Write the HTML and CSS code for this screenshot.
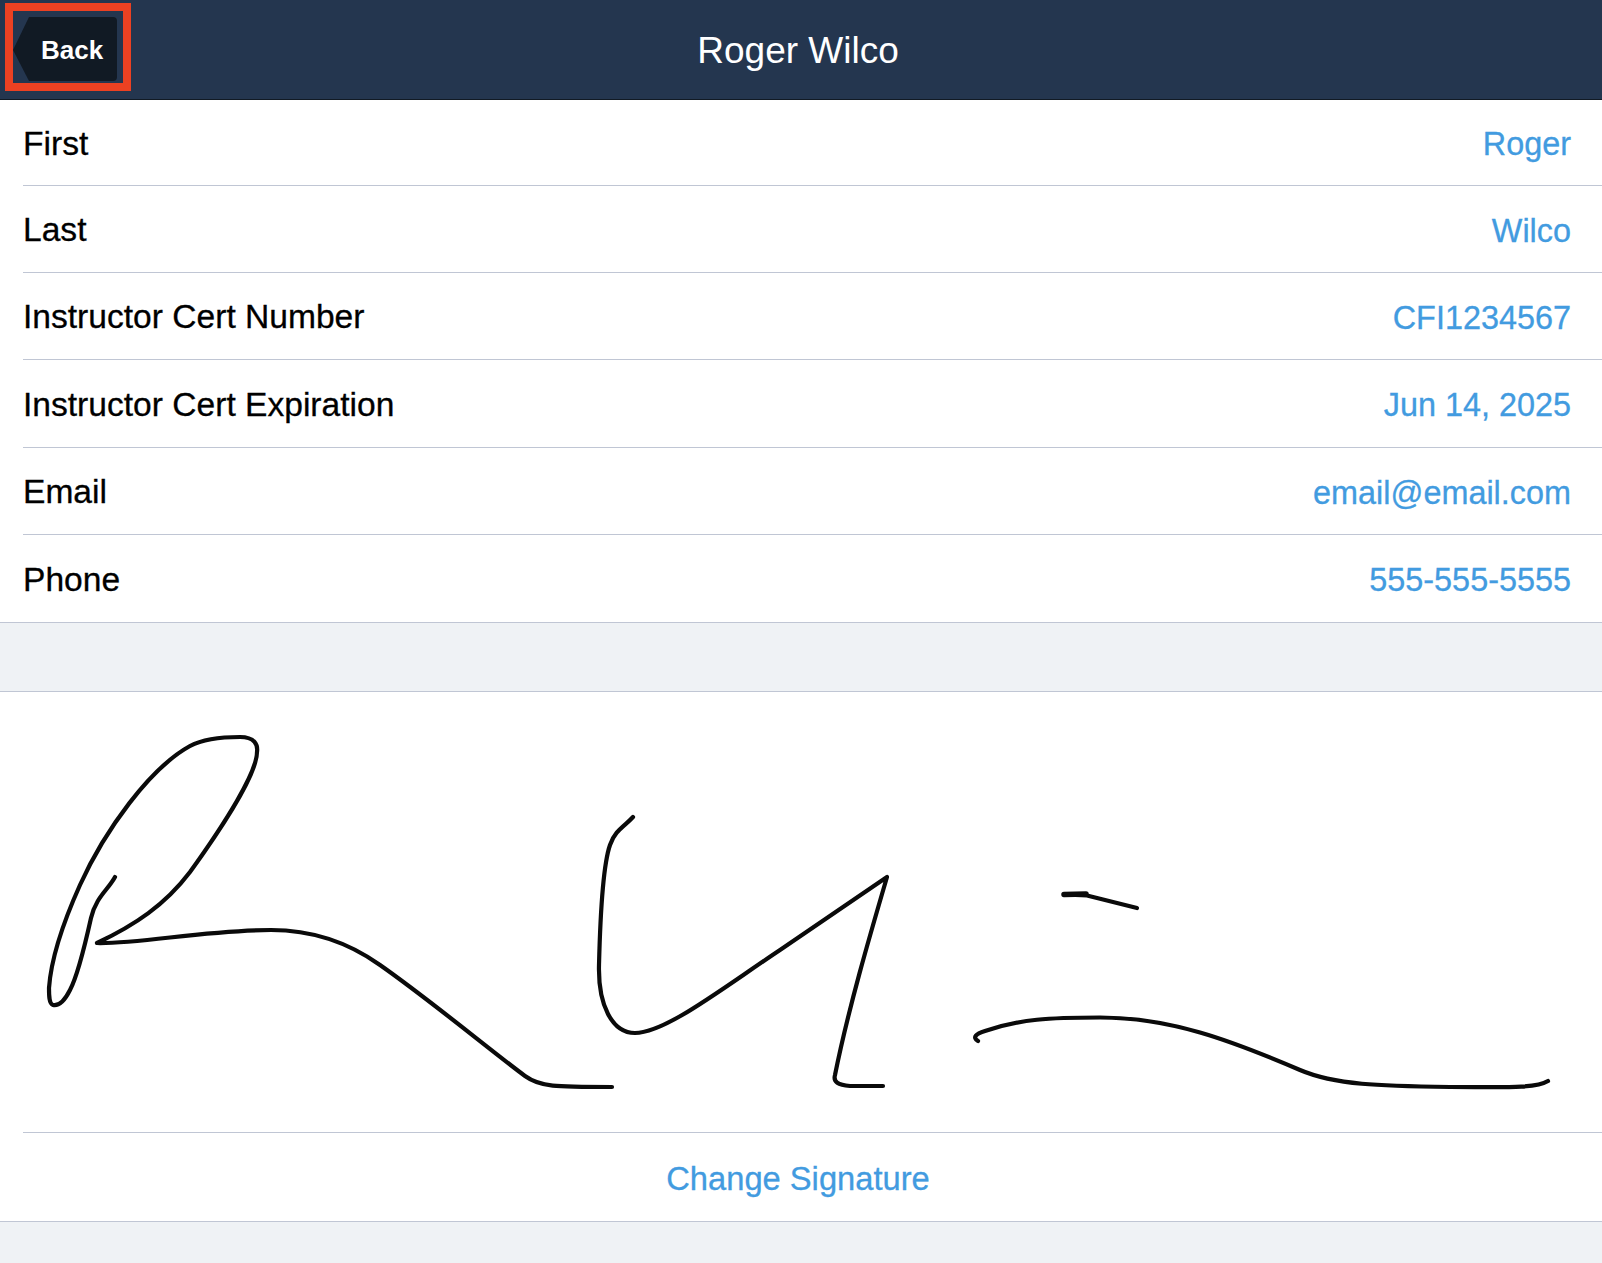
FILE: index.html
```html
<!DOCTYPE html>
<html lang="en">
<head>
<meta charset="utf-8">
<title>Roger Wilco</title>
<link rel="stylesheet" href="styles.css">
</head>
<body>
<header class="nav">
  <div class="back-wrap">
    <svg class="back-shape" viewBox="0 0 104 64" aria-hidden="true"><path d="M16 0H100a4 4 0 0 1 4 4V60a4 4 0 0 1-4 4H16L0 33Z"/></svg>
    <span class="back-label">Back</span>
    <span class="highlight"></span>
  </div>
  <h1 class="title">Roger Wilco</h1>
</header>
<section class="form">
  <div class="row"><span class="label">First</span><span class="value">Roger</span></div>
  <div class="row"><span class="label">Last</span><span class="value">Wilco</span></div>
  <div class="row"><span class="label">Instructor Cert Number</span><span class="value">CFI1234567</span></div>
  <div class="row row-tall"><span class="label">Instructor Cert Expiration</span><span class="value">Jun 14, 2025</span></div>
  <div class="row"><span class="label">Email</span><span class="value">email@email.com</span></div>
  <div class="row"><span class="label">Phone</span><span class="value">555-555-5555</span></div>
</section>
<section class="signature">
  <svg class="sig-art" viewBox="0 692 1602 440" fill="none" stroke="#0a0a0a" stroke-width="4.2" stroke-linecap="round" stroke-linejoin="round" aria-label="Signature">
    <path d="M115 877C108 890 96 897 91 918C85 945 78 975 70 990C64 1002 58 1006 53 1005C49 1004 49 995 49 988C51 960 62 925 80 885C105 830 150 768 190 746C205 738 225 737 240 737C255 737 258 745 257 752C257 772 226 822 190 872C165 905 135 925 97 943C140 944 205 930 271 930C310 930 345 940 380 965C430 1000 490 1050 525 1076C540 1087 555 1087 612 1087"/>
    <path d="M633 817C625 826 615 830 610 845C603 865 600 925 599 965C598 1005 612 1033 635 1033C665 1033 720 990 780 950L887 877C870 935 848 1010 835 1075C833 1082 838 1085 850 1086L883 1086"/>
    <path d="M1064 894.5L1087 895.5L1137 908"/>
    <path class="sig-heavy" d="M1064 894.5L1086 894"/>
    <path d="M978 1041C972 1037 976 1034 985 1031C1020 1019 1050 1017.5 1100 1017.5C1170 1017.5 1230 1040 1300 1070C1335 1085 1380 1086 1450 1087C1500 1087 1535 1089 1548 1081"/>
  </svg>
  <div class="sig-action"><span class="change">Change Signature</span></div>
</section>
</body>
</html>
```
FILE: styles.css
```css
* { box-sizing: border-box; }
html, body { margin: 0; height: 100%; }
body {
  background: #eff2f5;
  font-family: "Liberation Sans", Arial, sans-serif;
  overflow: hidden;
}
.nav {
  position: relative;
  display: flex;
  align-items: center;
  justify-content: center;
  height: 100px;
  padding-right: 6px;
  background: #24364f;
  border-bottom: 1px solid #111a24;
}
.title {
  margin: 3px 0 0;
  font-size: 37px;
  font-weight: 400;
  color: #fff;
}
.back-wrap {
  position: absolute;
  left: 13px;
  top: 17px;
  width: 104px;
  height: 64px;
}
.back-shape { display: block; width: 104px; height: 64px; fill: #111a24; }
.back-label {
  position: absolute;
  left: 28px;
  top: 18px;
  font-size: 26px;
  line-height: 30px;
  font-weight: 700;
  color: #fff;
}
.highlight {
  position: absolute;
  left: -8px;
  top: -14px;
  width: 126px;
  height: 88px;
  border: 8px solid #ec4122;
}
.form {
  background: #fff;
  padding-left: 23px;
  border-bottom: 1px solid #c0c6d4;
}
.row {
  display: flex;
  justify-content: space-between;
  align-items: center;
  height: 87px;
  padding-right: 31px;
  border-bottom: 1px solid #c0c6d4;
}
.row:first-child { height: 86px; }
.row-tall { height: 88px; }
.row:last-child { height: 87px; border-bottom: 0; }
.label {
  margin-top: 2px;
  font-size: 33.6px;
  color: #000;
  -webkit-text-stroke: 0.3px #000;
}
.value {
  margin-top: 4px;
  font-size: 32.4px;
  color: #429be0;
  -webkit-text-stroke: 0.3px #429be0;
}
.signature {
  margin-top: 68px;
  background: #fff;
  border-top: 1px solid #c0c6d4;
  border-bottom: 1px solid #c0c6d4;
}
.sig-art { display: block; width: 100%; height: 440px; }
.sig-heavy { stroke-width: 5.5; }
.sig-action {
  display: flex;
  justify-content: center;
  align-items: center;
  height: 89px;
  margin-left: 23px;
  padding-right: 29px;
  border-top: 1px solid #c0c6d4;
}
.change {
  margin-top: 4px;
  font-size: 32.7px;
  color: #429be0;
  -webkit-text-stroke: 0.3px #429be0;
}
```
